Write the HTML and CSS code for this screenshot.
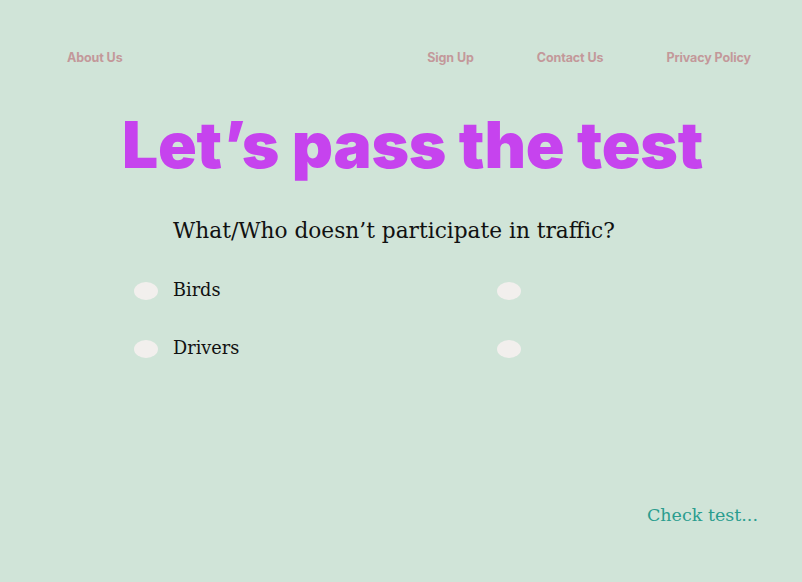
FILE: index.html
```html
<!DOCTYPE html>
<html lang="en">
<head>
<meta charset="utf-8">
<title>Let's pass the test</title>
<link rel="stylesheet" href="styles.css">
</head>
<body>
<div class="page">
  <nav class="nav">
    <a class="nav-link">About Us</a>
    <div class="nav-right">
      <a class="nav-link">Sign Up</a>
      <a class="nav-link">Contact Us</a>
      <a class="nav-link">Privacy Policy</a>
    </div>
  </nav>
  <h1 class="title">Let’s pass the test</h1>
  <p class="question">What/Who doesn’t participate in traffic?</p>
  <div class="options">
    <label class="option"><span class="radio"></span><span class="opt-text">Birds</span></label>
    <label class="option"><span class="radio"></span><span class="opt-text"></span></label>
    <label class="option"><span class="radio"></span><span class="opt-text">Drivers</span></label>
    <label class="option"><span class="radio"></span><span class="opt-text"></span></label>
  </div>
  <div class="footer">
    <a class="check">Check test...</a>
  </div>
</div>
</body>
</html>
```
FILE: styles.css
```css
* { box-sizing: border-box; }
html, body { margin: 0; padding: 0; }
body {
  background: #d0e4d8;
  width: 802px;
  height: 582px;
  overflow: hidden;
}
.page {
  display: flex;
  flex-direction: column;
  height: 582px;
}
.nav {
  display: flex;
  justify-content: space-between;
  align-items: center;
  padding: 49px 51px 0 67px;
  height: 66px;
}
.nav-right {
  display: flex;
  gap: 63px;
}
.nav-link {
  font-family: Inter, "Liberation Sans", sans-serif;
  font-weight: 700;
  font-size: 12.5px;
  color: #c3989a;
  letter-spacing: -0.1px;
}
.title {
  margin: 47px 0 0 122px;
  font-family: Inter, "Liberation Sans", sans-serif;
  font-weight: 900;
  font-size: 64px;
  line-height: 64px;
  letter-spacing: -0.2px;
  color: #c643ee;
}
.question {
  margin: 39px 0 0 173px;
  font-family: "DejaVu Serif", serif;
  font-size: 21.7px;
  line-height: 30px;
  color: #111;
}
.options {
  display: grid;
  grid-template-columns: 363px 200px;
  row-gap: 34px;
  margin: 32px 0 0 134px;
}
.option {
  display: flex;
  align-items: center;
  height: 24px;
}
.radio {
  width: 24px;
  height: 18px;
  border-radius: 50%;
  background: #f2efed;
  flex: none;
  margin-top: 2px;
}
.opt-text {
  margin-left: 15px;
  font-family: "DejaVu Serif", serif;
  font-size: 17.7px;
  color: #111;
}
.footer {
  margin-top: auto;
  display: flex;
  justify-content: flex-end;
  padding: 0 44px 57px 0;
}
.check {
  font-family: "DejaVu Serif", serif;
  font-size: 17.5px;
  color: #2a9d8f;
}
```
